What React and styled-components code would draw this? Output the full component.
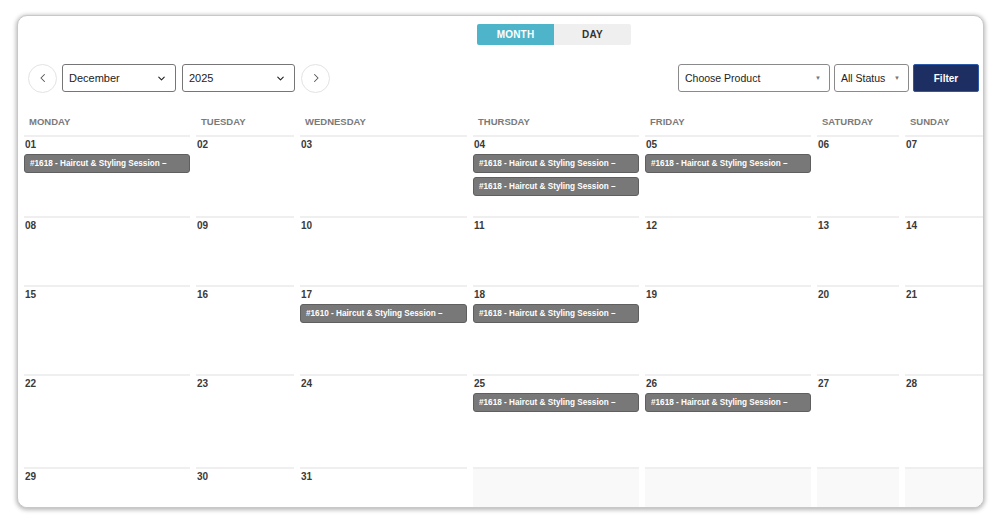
import React from 'react';
import styled, { createGlobalStyle } from 'styled-components';

const GlobalStyle = createGlobalStyle`
  html, body {
    margin: 0;
    padding: 0;
    background: #fff;
    font-family: "Liberation Sans", Arial, sans-serif;
  }
`;

const COLS = [166, 98, 167, 166, 166, 82, 82];
const DAYS = ['Monday', 'Tuesday', 'Wednesday', 'Thursday', 'Friday', 'Saturday', 'Sunday'];

const EV = '#1618 - Haircut & Styling Session –';

const weeks = [
  {
    height: 81,
    days: [
      { n: '01', events: [EV] },
      { n: '02' },
      { n: '03' },
      { n: '04', events: [EV, EV] },
      { n: '05', events: [EV] },
      { n: '06' },
      { n: '07' }
    ]
  },
  {
    height: 69,
    days: [{ n: '08' }, { n: '09' }, { n: '10' }, { n: '11' }, { n: '12' }, { n: '13' }, { n: '14' }]
  },
  {
    height: 89,
    days: [
      { n: '15' },
      { n: '16' },
      { n: '17', events: ['#1610 - Haircut & Styling Session –'] },
      { n: '18', events: [EV] },
      { n: '19' },
      { n: '20' },
      { n: '21' }
    ]
  },
  {
    height: 93,
    days: [
      { n: '22' },
      { n: '23' },
      { n: '24' },
      { n: '25', events: [EV] },
      { n: '26', events: [EV] },
      { n: '27' },
      { n: '28' }
    ]
  },
  {
    height: 60,
    days: [{ n: '29' }, { n: '30' }, { n: '31' }, { empty: true }, { empty: true }, { empty: true }, { empty: true }]
  }
];

const ChevronLeft = () => (
  <svg width="14" height="14" viewBox="0 0 24 24" fill="none" stroke="#555" strokeWidth="1.8" strokeLinecap="round" strokeLinejoin="round">
    <path d="M14.5 18l-6-6 6-6" />
  </svg>
);

const ChevronRight = () => (
  <svg width="14" height="14" viewBox="0 0 24 24" fill="none" stroke="#555" strokeWidth="1.8" strokeLinecap="round" strokeLinejoin="round">
    <path d="M9.5 18l6-6-6-6" />
  </svg>
);

const ChevronDown = () => (
  <svg width="11" height="11" viewBox="0 0 24 24" fill="none" stroke="#222" strokeWidth="2.4" strokeLinecap="round" strokeLinejoin="round">
    <path d="M6 9l6 6 6-6" />
  </svg>
);

const App = () => (
  <Page>
    <GlobalStyle />
    <Card>
      <ViewToggle>
        <ToggleButton active>MONTH</ToggleButton>
        <ToggleButton>DAY</ToggleButton>
      </ViewToggle>

      <Toolbar>
        <NavGroup>
          <RoundButton>
            <ChevronLeft />
          </RoundButton>
          <Select width={114}>
            <span>December</span>
            <ChevronDown />
          </Select>
          <Select width={113}>
            <span>2025</span>
            <ChevronDown />
          </Select>
          <RoundButton>
            <ChevronRight />
          </RoundButton>
        </NavGroup>
        <FilterGroup>
          <Dropdown width={152}>
            <span>Choose Product</span>
            <Caret>▼</Caret>
          </Dropdown>
          <Dropdown width={75}>
            <span>All Status</span>
            <Caret>▼</Caret>
          </Dropdown>
          <FilterButton>Filter</FilterButton>
        </FilterGroup>
      </Toolbar>

      <Grid>
        {DAYS.map((d) => (
          <HeadCell key={d}>{d}</HeadCell>
        ))}
        {weeks.map((w, wi) =>
          w.days.map((day, di) => (
            <DayCell key={wi + '-' + di} h={w.height} empty={day.empty}>
              {day.n && <DayNum>{day.n}</DayNum>}
              {day.events &&
                day.events.map((e, ei) => <Event key={ei}>{e}</Event>)}
            </DayCell>
          ))
        )}
      </Grid>
    </Card>
  </Page>
);

export default App;

const Page = styled.div`
  padding: 15px 16px 0 17px;
  height: 525px;
  box-sizing: border-box;
`;

const Card = styled.div`
  width: 967px;
  height: 493px;
  box-sizing: border-box;
  border-radius: 10px;
  background: #fff;
  border: 1px solid #c8c8c8;
  box-shadow: 0 1px 4px 1px rgba(0, 0, 0, 0.28);
  overflow: hidden;
  padding: 8px 0 0 6px;
`;

const ViewToggle = styled.div`
  display: flex;
  margin-left: 453px;
  width: 154px;
  border-radius: 2px;
  overflow: hidden;
`;

const ToggleButton = styled.div`
  width: 77px;
  height: 21px;
  display: flex;
  align-items: center;
  justify-content: center;
  font-size: 10px;
  font-weight: 600;
  letter-spacing: 0.2px;
  background: ${(p) => (p.active ? '#4db4ca' : '#efefef')};
  color: ${(p) => (p.active ? '#fff' : '#333')};
`;

const Toolbar = styled.div`
  display: flex;
  justify-content: space-between;
  align-items: center;
  margin-top: 19px;
  width: 955px;
  height: 28px;
`;

const NavGroup = styled.div`
  display: flex;
  align-items: center;
  gap: 5px;
  padding-left: 4px;
`;

const RoundButton = styled.div`
  width: 27px;
  height: 27px;
  border-radius: 50%;
  border: 1px solid #e3e3e3;
  display: flex;
  align-items: center;
  justify-content: center;
`;

const Select = styled.div`
  width: ${(p) => p.width}px;
  height: 28px;
  box-sizing: border-box;
  border: 1px solid #767676;
  border-radius: 3px;
  display: flex;
  align-items: center;
  justify-content: space-between;
  padding: 0 8px 0 6px;
  font-size: 11px;
  color: #222;
  margin-right: 1px;
`;

const FilterGroup = styled.div`
  display: flex;
  align-items: center;
  gap: 4px;
`;

const Dropdown = styled.div`
  width: ${(p) => p.width}px;
  height: 28px;
  box-sizing: border-box;
  border: 1px solid #8a8a8a;
  border-radius: 3px;
  display: flex;
  align-items: center;
  justify-content: space-between;
  padding: 0 8px 0 6px;
  font-size: 10.5px;
  color: #222;
`;

const Caret = styled.span`
  font-size: 6px;
  color: #777;
`;

const FilterButton = styled.div`
  width: 66px;
  height: 28px;
  box-sizing: border-box;
  background: #1d2f62;
  border: 1px solid #2c5aa8;
  border-radius: 2px;
  color: #fff;
  font-size: 10px;
  font-weight: 600;
  display: flex;
  align-items: center;
  justify-content: center;
`;

const Grid = styled.div`
  display: grid;
  grid-template-columns: ${COLS.map((c) => c + 'px').join(' ')};
  column-gap: 6px;
  margin-top: 20px;
  width: max-content;
`;

const HeadCell = styled.div`
  height: 23px;
  box-sizing: border-box;
  padding: 4px 0 0 5px;
  font-size: 9.5px;
  font-weight: 600;
  color: #7a7a7a;
  text-transform: uppercase;
  line-height: 12px;
`;

const DayCell = styled.div`
  height: ${(p) => p.h}px;
  box-sizing: border-box;
  border-top: 2px solid #efefef;
  background: ${(p) => (p.empty ? '#f9f9f9' : '#fff')};
  display: flex;
  flex-direction: column;
  gap: 4px;
  padding: 2px 0 0 0;
`;

const DayNum = styled.div`
  font-size: 10px;
  font-weight: 600;
  color: #3a3a3a;
  line-height: 12px;
  padding-left: 1px;
  margin-bottom: -1px;
`;

const Event = styled.div`
  height: 19px;
  box-sizing: border-box;
  background: #787878;
  border: 1px solid #5f5f5f;
  border-radius: 3px;
  color: #fff;
  font-size: 8.2px;
  font-weight: 700;
  display: flex;
  align-items: center;
  padding-left: 5px;
  white-space: nowrap;
  overflow: hidden;
`;
